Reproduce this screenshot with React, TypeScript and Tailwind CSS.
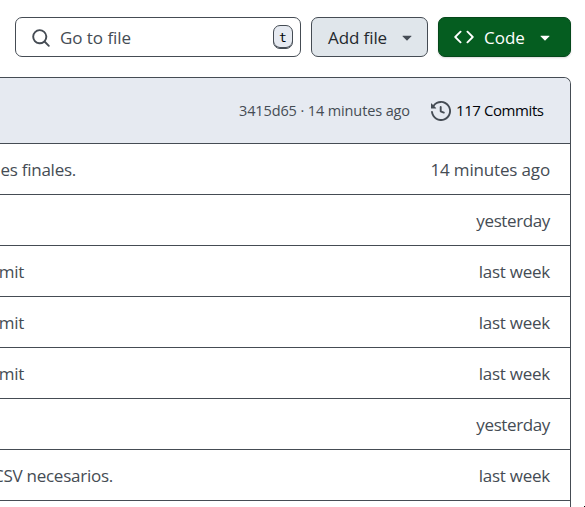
import React from 'react';

const icons = {
  search:
    'M10.68 11.74a6 6 0 0 1-7.922-8.982 6 6 0 0 1 8.982 7.922l3.04 3.04a.749.749 0 0 1-.326 1.275.749.749 0 0 1-.734-.215ZM11.5 7a4.499 4.499 0 1 0-8.997 0A4.499 4.499 0 0 0 11.5 7Z',
  code:
    'm11.28 3.22 4.25 4.25a.75.75 0 0 1 0 1.06l-4.25 4.25a.749.749 0 0 1-1.275-.326.749.749 0 0 1 .215-.734L13.94 8l-3.72-3.72a.749.749 0 0 1 .326-1.275.749.749 0 0 1 .734.215Zm-6.56 0a.751.751 0 0 1 1.042.018.751.751 0 0 1 .018 1.042L2.06 8l3.72 3.72a.749.749 0 0 1-.326 1.275.749.749 0 0 1-.734-.215L.47 8.53a.75.75 0 0 1 0-1.06Z',
  caret:
    'm4.427 7.427 3.396 3.396a.25.25 0 0 0 .354 0l3.396-3.396A.25.25 0 0 0 11.396 7H4.604a.25.25 0 0 0-.177.427Z',
  history:
    'm.427 1.927 1.215 1.215a8.002 8.002 0 1 1-1.6 5.685.75.75 0 1 1 1.493-.154 6.5 6.5 0 1 0 1.18-4.458l1.358 1.358A.25.25 0 0 1 3.896 6H.25A.25.25 0 0 1 0 5.75V2.104a.25.25 0 0 1 .427-.177ZM7.75 4a.75.75 0 0 1 .75.75v2.992l2.028.812a.75.75 0 0 1-.557 1.392l-2.5-1A.751.751 0 0 1 7 8.25v-3.5A.75.75 0 0 1 7.75 4Z',
};

function Icon({ name }: { name: keyof typeof icons }) {
  return (
    <svg viewBox="0 0 16 16" className="size-5 shrink-0 fill-current">
      <path d={icons[name]} />
    </svg>
  );
}

const rows = [
  { message: 'nes finales.', age: '14 minutes ago' },
  { message: '', age: 'yesterday' },
  { message: 'mit', age: 'last week' },
  { message: 'mit', age: 'last week' },
  { message: 'mit', age: 'last week' },
  { message: '', age: 'yesterday' },
  { message: 'CSV necesarios.', age: 'last week' },
];

const messageWidth: Record<string, string> = {
  'nes finales.': 'w-[76px]',
  mit: 'w-6',
  'CSV necesarios.': 'w-[113px]',
};

const ageTracking: Record<string, string> = {
  '14 minutes ago': 'tracking-[-0.16px]',
  yesterday: 'tracking-[-0.38px]',
  'last week': 'tracking-[-0.25px]',
};

export default function App() {
  return (
    <div className="relative h-[507px] w-[585px] overflow-hidden bg-white pt-[17px] font-['Open_Sans','Noto_Sans',sans-serif] text-[17px] whitespace-nowrap text-[#454c54]">
      <div className="flex gap-2.5 pl-[15px]">
        <div className="flex h-10 w-[286px] items-center rounded-[7px] border border-[#454c54] pr-[7px] pl-[15px]">
          <div className="pt-0.5">
            <Icon name="search" />
          </div>
          <span className="ml-[9px] flex-1 pt-0.5 tracking-[-0.05px]">Go to file</span>
          <kbd className="flex h-6 w-5 items-center justify-center rounded-[7px] border border-[#454c54] bg-[#e6eaf1] pt-px font-['DejaVu_Sans_Mono',monospace] text-[13px] text-[#010409] shadow-[inset_0_-1px_0_#454c54]">
            t
          </kbd>
        </div>
        <button className="flex h-10 w-[117px] items-center rounded-[7px] border border-[#454c54] bg-[#e0e6eb] pl-[15px] text-[#25292e]">
          <span className="w-[70px] pt-0.5 pl-px text-left tracking-[-0.1px]">Add file</span>
          <span className="text-[#454c54]">
            <Icon name="caret" />
          </span>
        </button>
        <button className="flex h-10 w-[133px] items-center rounded-[7px] border border-[#04471a] bg-[#055d20] pl-[15px] text-white shadow-[0_1px_2px_rgba(1,4,9,0.15)]">
          <Icon name="code" />
          <span className="ml-2.5 w-[51px] pt-0.5 text-left">Code</span>
          <Icon name="caret" />
        </button>
      </div>

      <div className="mt-5 w-[571px] rounded-tr-[7px] border-t border-r border-[#454c54]">
        <div className="flex h-[65px] items-center justify-end rounded-tr-md bg-[#e6eaf1] pr-[26px]">
          <span className="w-[172px] text-[14.5px] tracking-[-0.12px]">3415d65 · 14 minutes ago</span>
          <span className="ml-5">
            <Icon name="history" />
          </span>
          <span className="ml-[5px] w-[88px] text-[15px] tracking-[-0.42px] text-[#010409]">117 Commits</span>
        </div>
        {rows.map((row, i) => (
          <div key={i} className="flex h-[51px] items-center justify-between border-t border-[#454c54] pt-0.5 pr-5">
            <div className={`flex justify-end tracking-[-0.25px] ${messageWidth[row.message] ?? ''}`}>
              <span>{row.message}</span>
            </div>
            <span className={ageTracking[row.age]}>{row.age}</span>
          </div>
        ))}
        <div className="h-5 border-t border-[#454c54]" />
      </div>
      <div className="absolute right-0 bottom-0 size-px bg-black" />
    </div>
  );
}
